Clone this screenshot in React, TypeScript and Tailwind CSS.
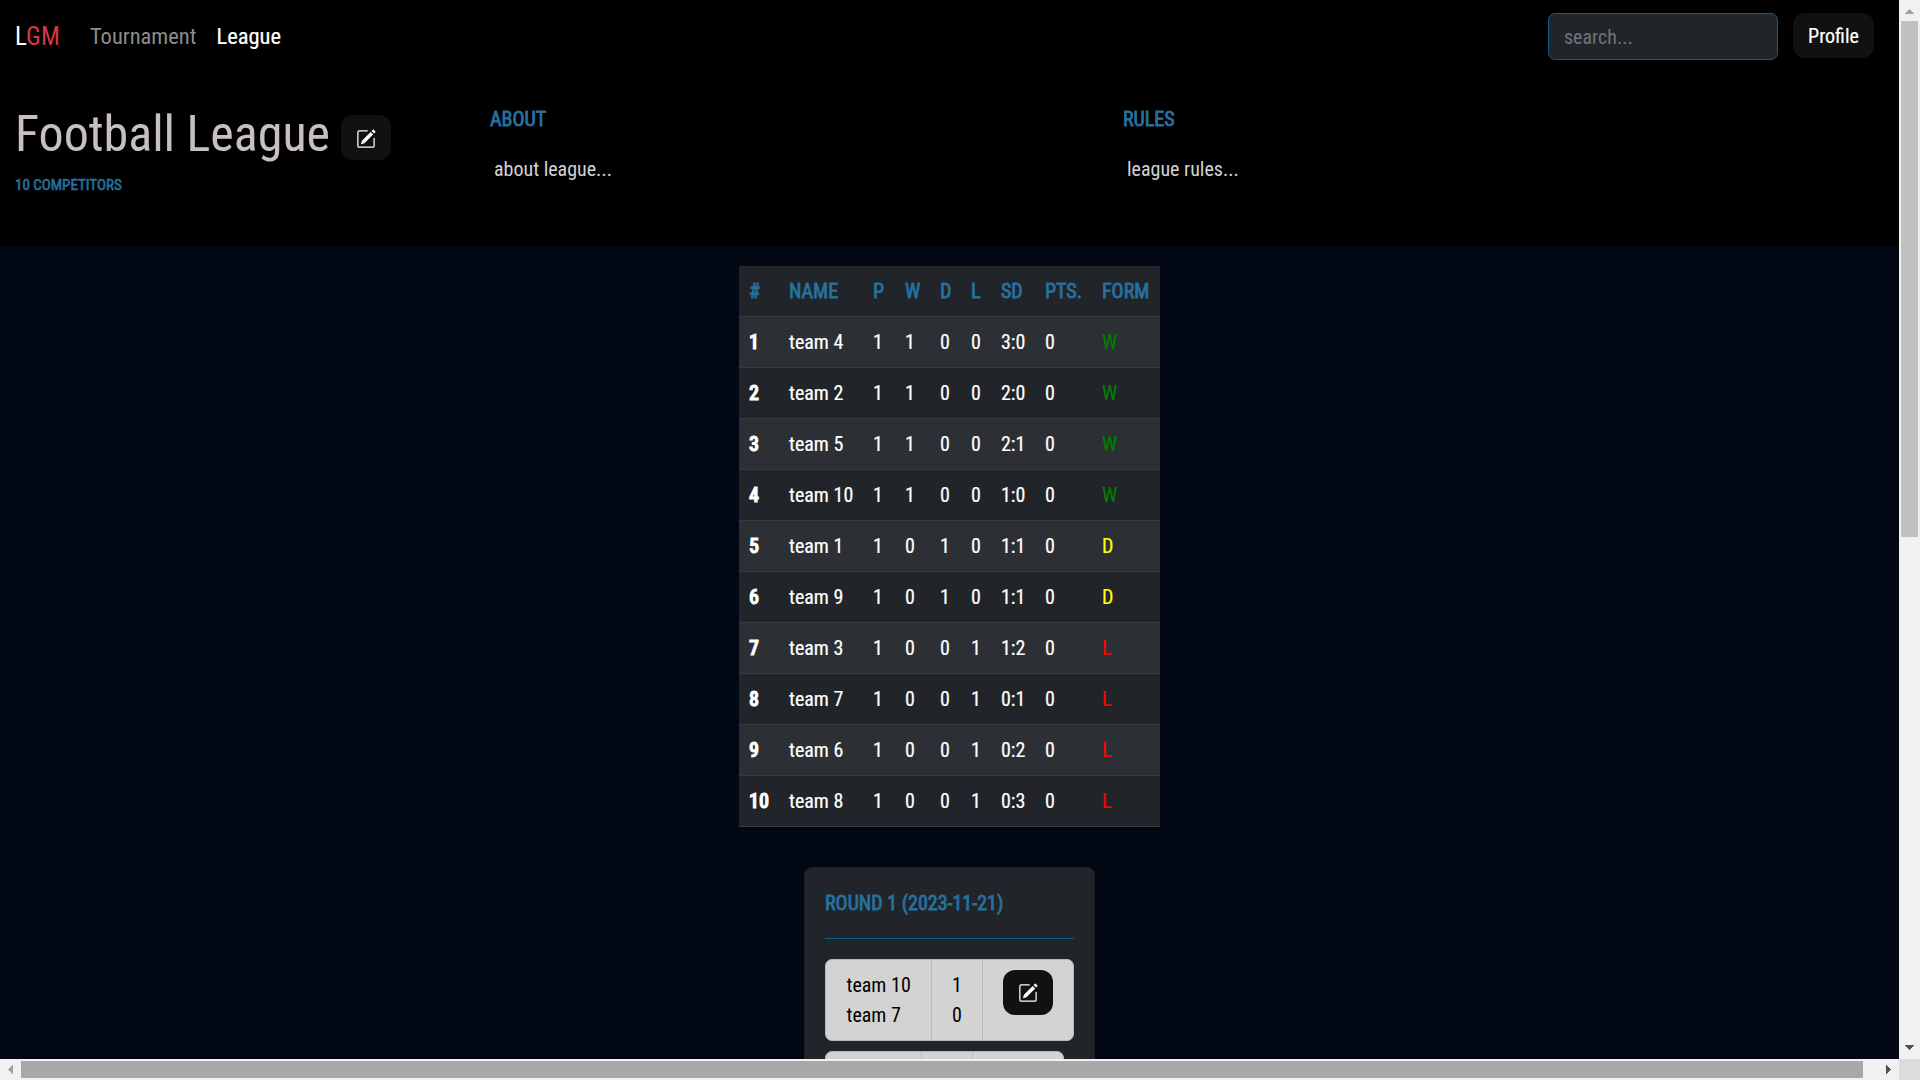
import React from "react";

type Form = "W" | "D" | "L";
type Team = [string, number, number, number, number, string, number, Form];

const teams: Team[] = [
  ["team 4", 1, 1, 0, 0, "3:0", 0, "W"],
  ["team 2", 1, 1, 0, 0, "2:0", 0, "W"],
  ["team 5", 1, 1, 0, 0, "2:1", 0, "W"],
  ["team 10", 1, 1, 0, 0, "1:0", 0, "W"],
  ["team 1", 1, 0, 1, 0, "1:1", 0, "D"],
  ["team 9", 1, 0, 1, 0, "1:1", 0, "D"],
  ["team 3", 1, 0, 0, 1, "1:2", 0, "L"],
  ["team 7", 1, 0, 0, 1, "0:1", 0, "L"],
  ["team 6", 1, 0, 0, 1, "0:2", 0, "L"],
  ["team 8", 1, 0, 0, 1, "0:3", 0, "L"],
];

const formColor: Record<Form, string> = {
  W: "text-[#008000]",
  D: "text-[#ffff00]",
  L: "text-[#ff0000]",
};

const columns: [string, string][] = [
  ["#", "w-[40px]"],
  ["NAME", "w-[84px]"],
  ["P", "w-[32px]"],
  ["W", "w-[35px]"],
  ["D", "w-[31px]"],
  ["L", "w-[30px]"],
  ["SD", "w-[44px]"],
  ["PTS.", "w-[57px]"],
  ["FORM", "w-[68px]"],
];

function EditButton() {
  return (
    <button className="flex h-[45px] w-[50px] shrink-0 items-center justify-center rounded-[12px] bg-[#111111] text-white">
      <svg width="20" height="20" viewBox="0 0 16 16" fill="currentColor" className="translate-y-px">
        <path d="M15.502 1.94a.5.5 0 0 1 0 .706L14.459 3.69l-2-2L13.502.646a.5.5 0 0 1 .707 0l1.293 1.293zm-1.75 2.456-2-2L4.939 9.21a.5.5 0 0 0-.121.196l-.805 2.414a.25.25 0 0 0 .316.316l2.414-.805a.5.5 0 0 0 .196-.12l6.813-6.814z" />
        <path
          fillRule="evenodd"
          d="M1 13.5A1.5 1.5 0 0 0 2.5 15h11a1.5 1.5 0 0 0 1.5-1.5v-6a.5.5 0 0 0-1 0v6a.5.5 0 0 1-.5.5h-11a.5.5 0 0 1-.5-.5v-11a.5.5 0 0 1 .5-.5H9a.5.5 0 0 0 0-1H2.5A1.5 1.5 0 0 0 1 2.5v11z"
        />
      </svg>
    </button>
  );
}

function Navbar() {
  return (
    <nav className="flex h-[73px] items-center pl-[15px]">
      <a className="mr-[31px] w-[44px] text-[25px] text-white">
        L<span className="text-[#dc3545]">GM</span>
      </a>
      <a className="mb-[2px] w-[126.5px] text-[22.5px] text-[#8c8c8c]">Tournament</a>
      <a className="mb-[2px] text-[22.5px] text-white [-webkit-text-stroke:0.2px]">League</a>
      <input
        placeholder="search..."
        className="mr-[15px] ml-auto h-[47px] w-[230px] rounded-[7px] border border-[#0d5c8c] bg-[#212529] px-[15px] placeholder:text-[#6c757d]"
      />
      <button className="mr-[25px] h-[45px] w-[81px] -translate-y-px rounded-[12px] bg-[#111111] text-white [-webkit-text-stroke:0.2px]">
        Profile
      </button>
    </nav>
  );
}

function Info({ title, text, className }: { title: string; text: string; className: string }) {
  return (
    <div className={className}>
      <div className="text-[#27719f] [-webkit-text-stroke:0.8px]">{title}</div>
      <div className="mt-[20px] pl-[4px] text-[#d3d3d3]">{text}</div>
    </div>
  );
}

function LeagueHeader() {
  return (
    <header className="flex h-[173px] pl-[15px]">
      <div className="w-[475px]">
        <div className="mt-[31px] flex h-[60px]">
          <h1 className="w-[326px] text-[50px] leading-[60px] text-[#c8c0c0]">Football League</h1>
          <div className="mt-[11px]">
            <EditButton />
          </div>
        </div>
        <div className="mt-[9px] text-[15px] leading-[24px] text-[#27719f] [-webkit-text-stroke:0.6px]">10 COMPETITORS</div>
      </div>
      <Info title="ABOUT" text="about league..." className="mt-[31px] w-[633px]" />
      <Info title="RULES" text="league rules..." className="mt-[31px]" />
    </header>
  );
}

function Standings() {
  return (
    <table className="mt-[20px] w-[421px] table-fixed border-collapse text-left text-white">
      <thead>
        <tr className="h-[50px] border-b border-[#373b3e] bg-[#212529] text-[#27719f]">
          {columns.map(([label, width]) => (
            <th key={label} className={`${width} pl-[10px] font-normal whitespace-nowrap [-webkit-text-stroke:0.8px]`}>
              {label}
            </th>
          ))}
        </tr>
      </thead>
      <tbody className="[-webkit-text-stroke:0.2px]">
        {teams.map(([name, p, w, d, l, sd, pts, form], i) => (
          <tr key={name} className="h-[51px] border-b border-[#373b3e] odd:bg-[#2c3034] even:bg-[#212529]">
            <th className="pl-[10px] font-medium [-webkit-text-stroke:1px]">{i + 1}</th>
            <td className="pl-[10px] whitespace-nowrap">{name}</td>
            <td className="pl-[10px]">{p}</td>
            <td className="pl-[10px]">{w}</td>
            <td className="pl-[10px]">{d}</td>
            <td className="pl-[10px]">{l}</td>
            <td className="pl-[10px]">{sd}</td>
            <td className="pl-[10px]">{pts}</td>
            <td className={`pl-[10px] ${formColor[form]}`}>{form}</td>
          </tr>
        ))}
      </tbody>
    </table>
  );
}

function Match({ teamsCol, names, scores }: { teamsCol: string; names: string[]; scores: number[] }) {
  return (
    <div className="flex h-[82px] w-fit rounded-[7px] border border-[#b9b9b9] bg-[#d3d3d3] text-black">
      <div className={`${teamsCol} border-r border-[#b9b9b9] py-[10px] pl-[20.5px]`}>
        {names.map((name) => (
          <div key={name}>{name}</div>
        ))}
      </div>
      <div className="w-[51px] border-r border-[#b9b9b9] py-[10px] pl-[20px]">
        {scores.map((score) => (
          <div key={score}>{score}</div>
        ))}
      </div>
      <div className="w-[90px] pt-[10px] pl-[20px]">
        <EditButton />
      </div>
    </div>
  );
}

function RoundCard() {
  return (
    <section className="mt-[40px] h-[700px] w-[291px] shrink-0 rounded-[8px] border border-[#1c2024] bg-[#212529] px-[20px] pt-[20px]">
      <h2 className="text-[#27719f] [-webkit-text-stroke:0.8px]">ROUND 1 (2023-11-21)</h2>
      <div className="mt-[20px] mb-[20px] h-px bg-[#0d5c8c]" />
      <div className="flex flex-col gap-[10px]">
        <Match teamsCol="w-[106px]" names={["team 10", "team 7"]} scores={[1, 0]} />
        <Match teamsCol="w-[96px]" names={[]} scores={[]} />
      </div>
    </section>
  );
}

function Arrow({ points, color }: { points: string; color: string }) {
  return (
    <svg width="21" height="21" viewBox="0 0 21 21" shapeRendering="crispEdges">
      <polygon points={points} fill={color} />
    </svg>
  );
}

export default function App() {
  return (
    <div className="grid h-[1080px] w-[1920px] grid-cols-[1899px_21px] grid-rows-[1059px_21px] overflow-hidden bg-[#010813] font-['Roboto_Condensed',Roboto,sans-serif] text-[20px] leading-[30px] font-stretch-condensed">
      <main className="flex flex-col overflow-hidden">
        <div className="shrink-0 bg-black">
          <Navbar />
          <LeagueHeader />
        </div>
        <div className="flex flex-col items-center">
          <Standings />
          <RoundCard />
        </div>
      </main>
      <div className="flex flex-col bg-[#f1f1f1]">
        <Arrow points="6,14 15,14 10.5,9" color="#a3a3a3" />
        <div className="ml-[2px] h-[516px] w-[17px] bg-[#c1c1c1]" />
        <div className="mt-auto">
          <Arrow points="6,7 15,7 10.5,12" color="#505050" />
        </div>
      </div>
      <div className="flex bg-[#f1f1f1]">
        <Arrow points="13,6 13,15 8,10.5" color="#a3a3a3" />
        <div className="mt-[2px] h-[17px] w-[1842px] bg-[#a8a8a8]" />
        <div className="ml-auto">
          <Arrow points="8,6 8,15 13,10.5" color="#505050" />
        </div>
      </div>
      <div className="bg-[#dcdcdc]" />
    </div>
  );
}
